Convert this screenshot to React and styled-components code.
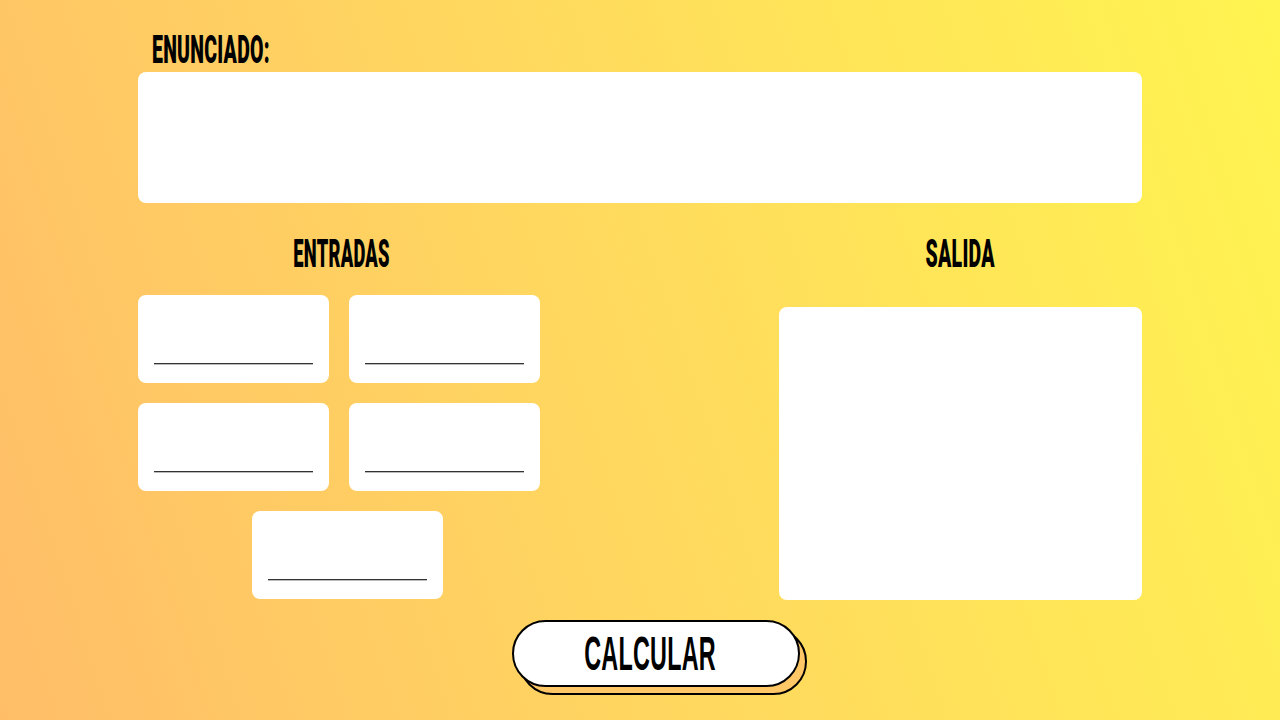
import styled, { createGlobalStyle } from 'styled-components'

const Global = createGlobalStyle`
  html, body { margin:0; padding:0; }
  body { font-family:'Roboto', 'Liberation Sans', sans-serif; }
`

/* ── Layout ── */
const Page      = styled.div`width:1280px;height:720px;box-sizing:border-box;padding:0 138px;background:linear-gradient(72deg,#ffbd68 0%,#ffd75f 45%,#fff450 100%);overflow:hidden;`
const TitleRow  = styled.div`height:72px;padding-left:14px;display:flex;align-items:flex-end;`
const Enunciado = styled.div`height:131px;background:#fff;border-radius:8px;`
const Columns   = styled.div`display:flex;justify-content:space-between;margin-top:32px;`
const InCol     = styled.div`width:402px;display:flex;flex-direction:column;align-items:center;`
const OutCol    = styled.div`width:363px;display:flex;flex-direction:column;align-items:center;`

/* condensed display type: the wide face is squeezed to a gothic width */
const Heading   = styled.div`
  display:inline-block;font-weight:900;color:#000;line-height:1;
  font-size:${({ $size }) => $size || 39}px;
  transform:scaleX(${({ $sx }) => $sx || 0.46});
  transform-origin:${({ $origin }) => $origin || 'center'};
  white-space:nowrap;letter-spacing:.5px;
`
const HeadBox   = styled.div`height:${({ $h }) => $h}px;display:flex;align-items:flex-start;justify-content:center;padding-left:${({ $shift }) => $shift || 0}px;`

const Grid      = styled.div`display:grid;grid-template-columns:191px 191px;gap:20px;margin-top:28px;`
const Field     = styled.div`width:191px;height:88px;box-sizing:border-box;background:#fff;border-radius:8px;padding:0 16px 19px;display:flex;align-items:flex-end;`
const Line      = styled.div`flex:1;height:1px;background:#333;box-shadow:0 1px 0 #bbb;`
const LastRow   = styled.div`grid-column:1 / span 2;display:flex;padding-left:114px;`

const Output    = styled.div`width:363px;height:293px;background:#fff;border-radius:8px;margin-top:40px;`

const BtnWrap   = styled.div`display:flex;justify-content:center;margin-top:20px;padding-left:31px;`
const BtnBox    = styled.div`position:relative;width:288px;height:67px;`
const BtnShadow = styled.div`position:absolute;left:7px;top:8px;right:-7px;bottom:-8px;border:2px solid #000;border-radius:34px;background:#ffc766;`
const Btn       = styled.button`position:relative;width:100%;height:100%;box-sizing:border-box;border:2px solid #000;border-radius:34px;background:#fff;display:flex;align-items:center;justify-content:center;padding:0 10px 0 0;cursor:pointer;`

const InputField = () => <Field><Line /></Field>

export default function App() {
  return (
    <>
      <Global />
      <Page>
        <TitleRow>
          <HeadBox $h={41}>
            <Heading $origin="left" $sx={0.5}>ENUNCIADO:</Heading>
          </HeadBox>
        </TitleRow>
        <Enunciado />

        <Columns>
          <InCol>
            <HeadBox $h={32} $shift={6}>
              <Heading $sx={0.47}>ENTRADAS</Heading>
            </HeadBox>
            <Grid>
              <InputField /><InputField />
              <InputField /><InputField />
              <LastRow><InputField /></LastRow>
            </Grid>
          </InCol>

          <OutCol>
            <HeadBox $h={32}>
              <Heading $sx={0.5}>SALIDA</Heading>
            </HeadBox>
            <Output />
          </OutCol>
        </Columns>

        <BtnWrap>
          <BtnBox>
            <BtnShadow />
            <Btn><Heading $size={49} $sx={0.477}>CALCULAR</Heading></Btn>
          </BtnBox>
        </BtnWrap>
      </Page>
    </>
  )
}
